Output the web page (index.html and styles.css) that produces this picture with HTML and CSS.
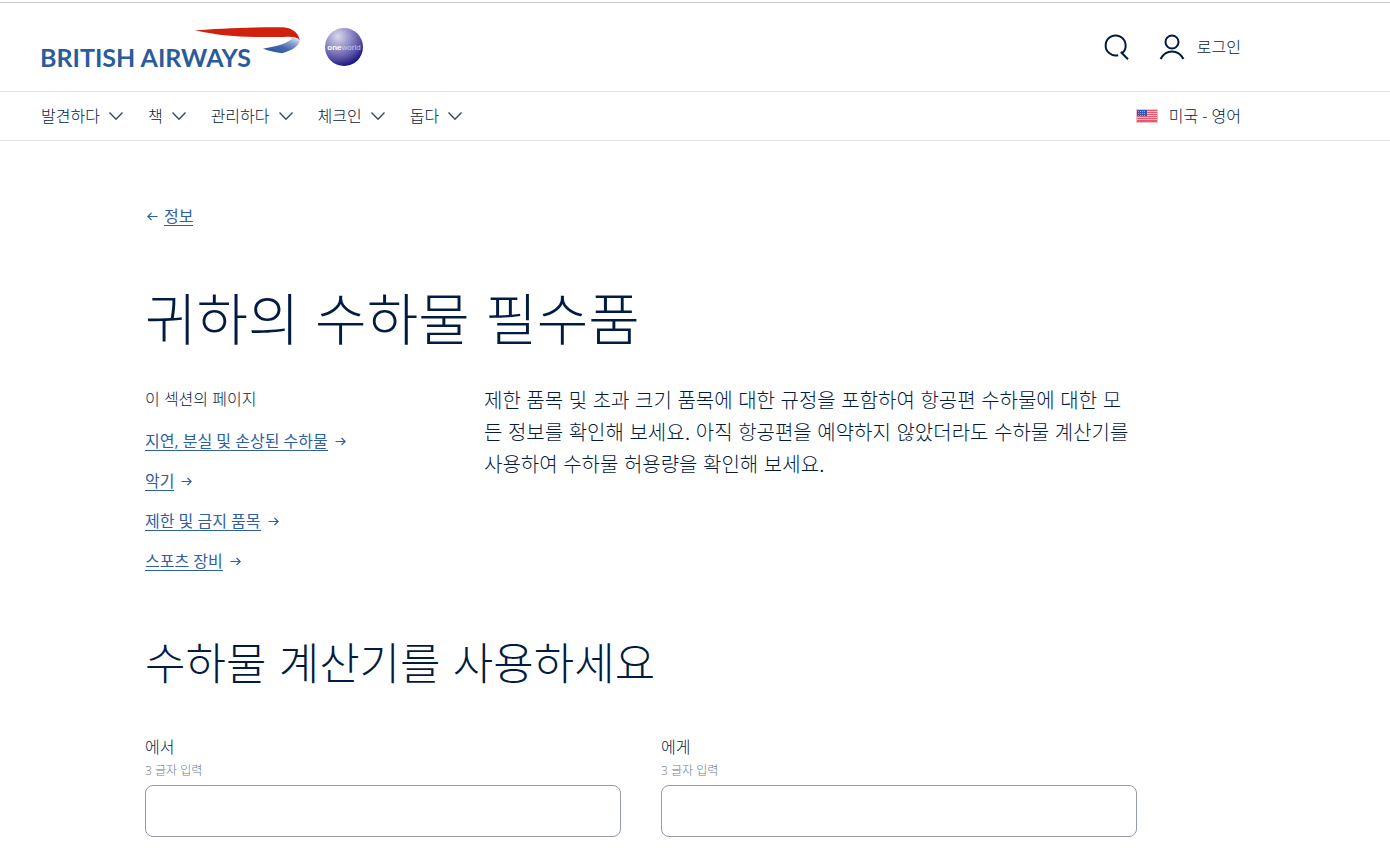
FILE: index.html
```html
<!DOCTYPE html>
<html lang="ko">
<head>
<meta charset="utf-8">
<meta name="viewport" content="width=device-width, initial-scale=1">
<title>귀하의 수하물 필수품</title>
<link rel="stylesheet" href="styles.css">
</head>
<body>
<svg class="sprite" aria-hidden="true">
  <symbol id="chevron" viewBox="0 0 14 8"><path d="M.5 .5 7 7.2 13.500 .5"/></symbol>
  <symbol id="arrow" viewBox="0 0 11 9"><path d="M.5 4.500H10M6.500 1 10.200 4.500 6.500 8"/></symbol>
</svg>
<header class="site-header">
  <div class="brand-row">
    <div class="bar">
      <a class="brand" href="#" aria-label="British Airways">
        <svg width="260" height="56" viewBox="1 -6 260 56">
          <defs>
            <linearGradient id="ribbon" x1="0" y1="1" x2="1" y2="0">
              <stop offset="0" stop-color="#1f5093"/><stop offset=".45" stop-color="#4368ae"/><stop offset=".72" stop-color="#8fa3d0"/><stop offset="1" stop-color="#f3f4fa"/>
            </linearGradient>
          </defs>
          <text class="wordmark" x="0" y="42">BRITISH AIRWAYS</text>
          <path fill="#d0210f" d="M155 5.300C177 3.700 208 2 243 2.200C253 2.800 259 8.500 259.700 15.500C256 12 252 11.600 247 11.800C235 12.400 215 12 200 11.500C182 10.500 170 8.500 155 5.300Z"/>
          <path fill="url(#ribbon)" d="M223 23.700C236 21.500 249 18.500 253 12.300C257 12.500 259.500 14 259.700 16.200C259 21 251 25.800 242 28.200C236 27.500 229 26 223 23.700Z"/>
        </svg>
      </a>
      <a class="alliance" href="#" aria-label="oneworld">
        <svg width="38" height="38" viewBox="0 0 38 38">
          <defs>
            <radialGradient id="globe" cx=".34" cy=".22" r=".82">
              <stop offset="0" stop-color="#d9d8ec"/><stop offset=".4" stop-color="#9590c8"/><stop offset=".72" stop-color="#5a52a4"/><stop offset="1" stop-color="#15107c"/>
            </radialGradient>
          </defs>
          <circle cx="19" cy="19" r="19" fill="url(#globe)"/>
          <text class="globe-text" x="19" y="22" text-anchor="middle"><tspan class="globe-one">one</tspan>world</text>
        </svg>
      </a>
      <div class="tools">
        <button class="tool" type="button" aria-label="검색">
          <svg width="26" height="26" viewBox="0 0 26 26"><path d="M15.200 21.200A10 10 0 1 1 19.300 19L17.800 18M17.800 18 25 25.200"/></svg>
        </button>
        <a class="tool" href="#">
          <svg width="26" height="26" viewBox="0 0 26 26"><circle cx="13" cy="8" r="6.500"/><path d="M1.500 25C4.500 19.500 8 17.500 13 17.500S21.500 19.500 24.500 25"/></svg>
          <span>로그인</span>
        </a>
      </div>
    </div>
  </div>
  <div class="nav-row">
    <div class="bar">
      <nav class="menu" aria-label="주요 메뉴">
        <button type="button">발견하다<svg class="chevron"><use href="#chevron"/></svg></button>
        <button type="button">책<svg class="chevron"><use href="#chevron"/></svg></button>
        <button type="button">관리하다<svg class="chevron"><use href="#chevron"/></svg></button>
        <button type="button">체크인<svg class="chevron"><use href="#chevron"/></svg></button>
        <button type="button">돕다<svg class="chevron"><use href="#chevron"/></svg></button>
      </nav>
      <a class="locale" href="#">
        <svg width="22" height="14" viewBox="0 0 22 14">
          <path fill="#f4bcc5" d="M0 0h22v14H0z"/>
          <path stroke="#e5596f" d="M1 1.500h20M1 3.500h20M1 5.500h20M1 7.500h20M1 9.500h20M1 11.500h20M1 12.500h20"/>
          <path fill="#3558ad" d="M1 1h10v6H1z"/>
          <path stroke="#93a7d7" stroke-dasharray="1 1" d="M2 2.500h8M2 4.500h8M2 6.500h8"/>
        </svg>
        <span>미국 - 영어</span>
      </a>
    </div>
  </div>
</header>
<main class="content">
  <div class="back"><svg class="arrow arrow-back"><use href="#arrow"/></svg><a href="#">정보</a></div>
  <h1>귀하의 수하물 필수품</h1>
  <div class="intro">
    <nav class="section-links" aria-labelledby="section-title">
      <p id="section-title">이 섹션의 페이지</p>
      <ul>
        <li><a href="#">지연, 분실 및 손상된 수하물</a><svg class="arrow"><use href="#arrow"/></svg></li>
        <li><a href="#">악기</a><svg class="arrow"><use href="#arrow"/></svg></li>
        <li><a href="#">제한 및 금지 품목</a><svg class="arrow"><use href="#arrow"/></svg></li>
        <li><a href="#">스포츠 장비</a><svg class="arrow"><use href="#arrow"/></svg></li>
      </ul>
    </nav>
    <p class="lead">제한 품목 및 초과 크기 품목에 대한 규정을 포함하여 항공편 수하물에 대한 모든 정보를 확인해 보세요. 아직 항공편을 예약하지 않았더라도 수하물 계산기를 사용하여 수하물 허용량을 확인해 보세요.</p>
  </div>
  <h2>수하물 계산기를 사용하세요</h2>
  <form class="route">
    <div class="field">
      <label for="from">에서</label>
      <span class="hint" id="from-hint">3 글자 입력</span>
      <input id="from" type="text" aria-describedby="from-hint">
    </div>
    <div class="field">
      <label for="to">에게</label>
      <span class="hint" id="to-hint">3 글자 입력</span>
      <input id="to" type="text" aria-describedby="to-hint">
    </div>
  </form>
</main>
</body>
</html>
```

FILE: styles.css
```css
* { box-sizing: border-box; }
body {
  margin: 0;
  background: #fff;
  color: #021b41;
  font-family: "Open Sans", "Noto Sans CJK KR", sans-serif;
  font-size: 16px;
  font-weight: 300;
  line-height: 24px;
}
button {
  border: 0;
  padding: 0;
  background: none;
  color: inherit;
  font: inherit;
}
svg { display: block; flex: none; fill: none; overflow: visible; }
h1, h2, p, ul { margin: 0; padding: 0; font-weight: 300; }
ul { list-style: none; }
.sprite { position: absolute; width: 0; height: 0; }

.site-header { padding-top: 2px; }
.brand-row { border-top: 1px solid #cbcbcd; border-bottom: 1px solid #e5e5e5; }
.nav-row { border-bottom: 1px solid #e5e5e5; }
.bar {
  display: flex;
  align-items: center;
  max-width: 1282px;
  padding: 0 41px;
}
.brand-row .bar { height: 88px; }
.nav-row .bar { height: 48px; }
.alliance { margin-left: 24px; }
.wordmark { fill: #2a5c9c; font: 700 25px Lato, sans-serif; }
.globe-text { fill: #cbc9e6; font: 400 8px "Liberation Sans", sans-serif; }
.globe-one { fill: #fff; font-weight: 700; }
.tools { display: flex; align-items: center; gap: 30px; margin-left: auto; }
.tool {
  display: flex;
  align-items: center;
  gap: 12px;
  color: inherit;
  text-decoration: none;
}
.tool svg { stroke: #021b41; stroke-width: 2; }
.menu { display: flex; gap: 25px; }
.menu button { display: flex; align-items: center; gap: 9px; }
.chevron { width: 14px; height: 8px; stroke: #34476a; stroke-width: 1.4; }
.locale {
  display: flex;
  align-items: center;
  gap: 11px;
  margin-left: auto;
  color: inherit;
  text-decoration: none;
}

.content { max-width: 1282px; padding: 66px 145px 20px; }
.content a {
  border-bottom: 1px solid #2e5ea6;
  color: #2e5ea6;
  font-weight: 400;
  line-height: 18px;
  text-decoration: none;
}
.arrow { width: 11px; height: 9px; stroke: #2e5ea6; stroke-width: 1.2; }
.arrow-back { transform: scaleX(-1); }
.back { display: flex; align-items: center; gap: 6px; padding-left: 2px; }
h1, h2, .lead { font-family: "Liberation Sans", "Noto Sans CJK KR", sans-serif; }
h1 { margin-top: 55px; font-size: 56px; line-height: 80px; }
.intro {
  display: grid;
  grid-template-columns: 299px 1fr;
  gap: 40px;
  margin-top: 24px;
}
.section-links { padding-top: 2px; }
.section-links ul { display: grid; gap: 16px; margin-top: 18px; }
.section-links li { display: flex; align-items: center; gap: 7px; height: 24px; }
.lead { font-size: 20px; line-height: 32px; word-break: break-all; }
h2 { margin-top: 60px; font-size: 44px; line-height: 64px; }
.route { display: grid; grid-template-columns: 1fr 1fr; gap: 40px; margin-top: 38px; }
.field { display: flex; flex-direction: column; }
.hint { color: #6a7790; font-size: 12px; }
.field input {
  width: 100%;
  height: 52px;
  margin-top: 2px;
  padding: 0 16px;
  border: 1px solid #9599b0;
  border-radius: 8px;
  background: #fff;
  color: inherit;
  font: inherit;
}
```
